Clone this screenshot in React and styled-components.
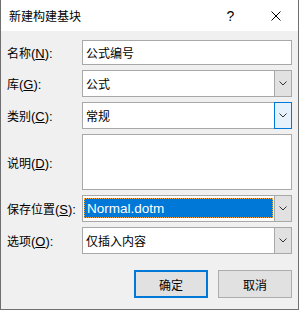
import React from "react";
import styled, { createGlobalStyle } from "styled-components";

const GlobalStyle = createGlobalStyle`
  html, body {
    margin: 0;
    padding: 0;
    background: #f0f0f0;
  }
  * {
    box-sizing: border-box;
  }
`;

const cjk = `"Noto Sans CJK SC", "Microsoft YaHei", sans-serif`;
const latin = `"Liberation Sans", Arial, "Noto Sans CJK SC", sans-serif`;

const Window = styled.div`
  width: 299px;
  height: 310px;
  background: #f0f0f0;
  border: 1px solid #6f6f6f;
  border-top: none;
  display: flex;
  flex-direction: column;
  font-family: ${cjk};
  font-size: 12px;
  color: #000;
`;

const TitleBar = styled.div`
  height: 31px;
  background: #fff;
  display: flex;
  align-items: center;
`;

const Title = styled.div`
  flex: 1;
  padding-left: 8px;
  line-height: 31px;
`;

const TitleButton = styled.div`
  width: 45px;
  height: 31px;
  display: flex;
  align-items: center;
  justify-content: center;
  font-family: ${latin};
  font-size: 14px;
`;

const Body = styled.div`
  flex: 1;
  padding: 9px 6px 11px 6px;
  display: flex;
  flex-direction: column;
`;

const Form = styled.div`
  display: grid;
  grid-template-columns: 75px 1fr;
  row-gap: 5px;
  align-items: center;
`;

const Label = styled.div`
  white-space: nowrap;
`;

const Key = styled.span`
  font-family: ${latin};
  font-size: 13px;
  & u {
    text-decoration-thickness: 1px;
    text-underline-offset: 1px;
  }
`;

const TextBox = styled.div`
  height: ${(p) => p.h || 25}px;
  background: #fff;
  border: 1px solid #a8a8a8;
  padding: 0 3px;
  display: flex;
  align-items: ${(p) => (p.multi ? "flex-start" : "center")};
`;

const Combo = styled.div`
  height: 27px;
  background: #fff;
  border: 1px solid #a8a8a8;
  display: flex;
  align-items: stretch;
`;

const ComboText = styled.div`
  flex: 1;
  display: flex;
  align-items: center;
  padding-left: 3px;
`;

const Selected = styled.div`
  flex: 1;
  margin: 2px 1px 3px 1px;
  background: #0078d7;
  color: #fff;
  border: 1px dotted #f3a642;
  display: flex;
  align-items: center;
  padding-left: 2px;
  font-family: ${latin};
  font-size: 13.5px;
`;

const DropButton = styled.div`
  width: 18px;
  margin: -1px -1px -1px 0;
  border: 1px solid ${(p) => (p.focus ? "#0078d7" : "#a8a8a8")};
  background: ${(p) => (p.focus ? "#e5f1fb" : "#e1e1e1")};
  display: flex;
  align-items: center;
  justify-content: center;
`;

const Footer = styled.div`
  margin-top: 16px;
  display: flex;
  justify-content: flex-end;
  gap: 10px;
`;

const Button = styled.div`
  width: 74px;
  height: 28px;
  background: #e1e1e1;
  border: ${(p) => (p.primary ? "2px solid #0078d7" : "1px solid #adadad")};
  display: flex;
  align-items: center;
  justify-content: center;
`;

const Chevron = () => (
  <svg width="8" height="5" viewBox="0 0 8 5">
    <polyline points="0.5,0.5 4,4 7.5,0.5" fill="none" stroke="#333" strokeWidth="1" />
  </svg>
);

const CloseIcon = () => (
  <svg width="10" height="10" viewBox="0 0 10 10">
    <line x1="0.5" y1="0.5" x2="9.5" y2="9.5" stroke="#000" strokeWidth="1" />
    <line x1="9.5" y1="0.5" x2="0.5" y2="9.5" stroke="#000" strokeWidth="1" />
  </svg>
);

const Field = ({ name, k }) => (
  <Label>
    {name}
    <Key>
      (<u>{k}</u>):
    </Key>
  </Label>
);

export default function App() {
  return (
    <>
      <GlobalStyle />
      <Window>
        <TitleBar>
          <Title>新建构建基块</Title>
          <TitleButton>?</TitleButton>
          <TitleButton>
            <CloseIcon />
          </TitleButton>
        </TitleBar>
        <Body>
          <Form>
            <Field name="名称" k="N" />
            <TextBox>公式编号</TextBox>

            <Field name="库" k="G" />
            <Combo>
              <ComboText>公式</ComboText>
              <DropButton>
                <Chevron />
              </DropButton>
            </Combo>

            <Field name="类别" k="C" />
            <Combo>
              <ComboText>常规</ComboText>
              <DropButton focus>
                <Chevron />
              </DropButton>
            </Combo>

            <Field name="说明" k="D" />
            <TextBox h={56} multi />

            <Field name="保存位置" k="S" />
            <Combo>
              <Selected>Normal.dotm</Selected>
              <DropButton>
                <Chevron />
              </DropButton>
            </Combo>

            <Field name="选项" k="O" />
            <Combo>
              <ComboText>仅插入内容</ComboText>
              <DropButton>
                <Chevron />
              </DropButton>
            </Combo>
          </Form>
          <Footer>
            <Button primary>确定</Button>
            <Button>取消</Button>
          </Footer>
        </Body>
      </Window>
    </>
  );
}
